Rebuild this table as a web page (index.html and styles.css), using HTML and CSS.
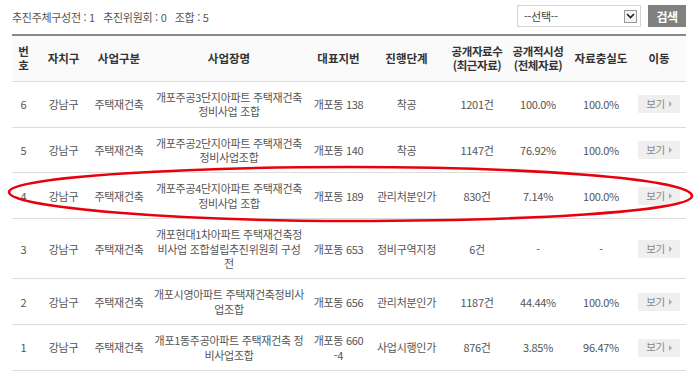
FILE: index.html
```html
<!DOCTYPE html>
<html lang="ko">
<head>
<meta charset="utf-8">
<title>추진주체 현황</title>
<link rel="stylesheet" href="styles.css">
</head>
<body>
<div class="page">
  <div class="topbar">
    <div class="summary">추진주체구성전 : 1&nbsp;&nbsp; 추진위원회 : 0&nbsp;&nbsp; 조합 : 5</div>
    <div class="search">
      <div class="select">
        <span class="select-text">--선택--</span>
        <span class="select-arrow"><svg width="9" height="6" viewBox="0 0 9 6"><path d="M1 1 L4.5 4.5 L8 1" fill="none" stroke="#222" stroke-width="1.6"/></svg></span>
      </div>
      <button class="btn-search">검색</button>
    </div>
  </div>
  <table class="list">
    <colgroup>
      <col class="c-no"><col class="c-gu"><col class="c-type"><col class="c-name"><col class="c-addr">
      <col class="c-step"><col class="c-cnt"><col class="c-time"><col class="c-full"><col class="c-go">
    </colgroup>
    <thead>
      <tr>
        <th class="no">번호</th><th>자치구</th><th>사업구분</th><th>사업장명</th><th>대표지번</th>
        <th>진행단계</th><th class="two">공개자료수<br>(최근자료)</th><th class="two">공개적시성<br>(전체자료)</th><th>자료충실도</th><th>이동</th>
      </tr>
    </thead>
    <tbody>
      <tr><td>6</td><td>강남구</td><td>주택재건축</td><td class="name">개포주공3단지아파트 주택재건축 정비사업 조합</td><td class="addr">개포동 138</td><td>착공</td><td>1201건</td><td>100.0%</td><td>100.0%</td><td><span class="btn-view">보기<i class="tri"></i></span></td></tr>
      <tr><td>5</td><td>강남구</td><td>주택재건축</td><td class="name">개포주공2단지아파트 주택재건축 정비사업조합</td><td class="addr">개포동 140</td><td>착공</td><td>1147건</td><td>76.92%</td><td>100.0%</td><td><span class="btn-view">보기<i class="tri"></i></span></td></tr>
      <tr><td>4</td><td>강남구</td><td>주택재건축</td><td class="name">개포주공4단지아파트 주택재건축 정비사업 조합</td><td class="addr">개포동 189</td><td>관리처분인가</td><td>830건</td><td>7.14%</td><td>100.0%</td><td><span class="btn-view">보기<i class="tri"></i></span></td></tr>
      <tr><td>3</td><td>강남구</td><td>주택재건축</td><td class="name">개포현대1차아파트 주택재건축정비사업 조합설립추진위원회 구성전</td><td class="addr">개포동 653</td><td>정비구역지정</td><td>6건</td><td>-</td><td>-</td><td><span class="btn-view">보기<i class="tri"></i></span></td></tr>
      <tr><td>2</td><td>강남구</td><td>주택재건축</td><td class="name">개포시영아파트 주택재건축정비사업조합</td><td class="addr">개포동 656</td><td>관리처분인가</td><td>1187건</td><td>44.44%</td><td>100.0%</td><td><span class="btn-view">보기<i class="tri"></i></span></td></tr>
      <tr><td>1</td><td>강남구</td><td>주택재건축</td><td class="name">개포1동주공아파트 주택재건축 정비사업조합</td><td class="addr">개포동 660<wbr><span class="nw">-4</span></td><td>사업시행인가</td><td>876건</td><td>3.85%</td><td>96.47%</td><td><span class="btn-view">보기<i class="tri"></i></span></td></tr>
    </tbody>
  </table>
</div>
<svg class="mark" width="700" height="387" viewBox="0 0 700 387">
  <path d="M9,192 C9,176 200,167 350,167 C520,167 692,178 692,196 C692,212 520,221 350,221 C180,221 9,208 9,192 Z" fill="none" stroke="#e8000b" stroke-width="2.6"/>
</svg>
</body>
</html>
```

FILE: styles.css
```css
* { box-sizing: border-box; }
html, body { margin: 0; padding: 0; background: #fff; }
body {
  font-family: "Noto Sans CJK KR", "Noto Sans", sans-serif;
  font-size: 11px;
  color: #555;
  width: 700px;
  height: 387px;
  overflow: hidden;
  position: relative;
}
.page { padding: 5px 14px 0 12px; }
.topbar {
  display: flex;
  justify-content: space-between;
  align-items: center;
  height: 22px;
  margin-bottom: 7px;
}
.summary { letter-spacing: -0.3px; color: #555; padding-top: 1px; }
.search { display: flex; align-items: center; gap: 7px; }
.select {
  width: 124px;
  height: 22px;
  border: 1px solid #d4d4d4;
  display: flex;
  align-items: center;
  justify-content: space-between;
  padding: 0 3px 0 6px;
  color: #444;
  letter-spacing: -0.3px;
}
.select-arrow {
  width: 13px;
  height: 13px;
  border: 1px solid #999;
  background: #f4f4f4;
  display: flex;
  align-items: center;
  justify-content: center;
}
.btn-search {
  width: 38px;
  height: 22px;
  border: 0;
  background: #808080;
  color: #fff;
  font-family: inherit;
  font-size: 12px;
  font-weight: bold;
  padding: 0;
  letter-spacing: -0.5px;
}
.list {
  width: 674px;
  table-layout: fixed;
  border-collapse: separate;
  border-spacing: 0;
  border-top: 2px solid #8a8a8a;
}
.c-no { width: 23px; }
.c-gu { width: 57px; }
.c-type { width: 54px; }
.c-name { width: 166px; }
.c-addr { width: 53px; }
.c-step { width: 83px; }
.c-cnt { width: 58px; }
.c-time { width: 64px; }
.c-full { width: 62px; }
.c-go { width: 54px; }
th, td {
  text-align: center;
  vertical-align: middle;
  padding: 8px 1px;
  line-height: 14.4px;
  border-bottom: 1px solid #dcdcdc;
  letter-spacing: -0.3px;
}
th {
  background: #fafafa;
  color: #333;
  font-weight: bold;
  font-size: 11.5px;
  letter-spacing: 0;
}
th.no { padding-left: 2px; padding-right: 2px; }
th.two { letter-spacing: -0.4px; padding-left: 0; padding-right: 0; }
td { color: #555; }
td.name { padding-left: 7.5px; padding-right: 7.5px; }
td.addr { padding-left: 0; padding-right: 0; }
.nw { white-space: nowrap; }
.btn-view {
  display: inline-flex;
  align-items: center;
  justify-content: center;
  gap: 4px;
  width: 42px;
  height: 18px;
  background: #efefef;
  color: #888;
  font-size: 10.5px;
  vertical-align: middle;
}
.tri {
  display: inline-block;
  width: 0;
  height: 0;
  border-top: 3px solid transparent;
  border-bottom: 3px solid transparent;
  border-left: 3px solid #aaa;
}
.mark { position: absolute; left: 0; top: 0; pointer-events: none; }
```
